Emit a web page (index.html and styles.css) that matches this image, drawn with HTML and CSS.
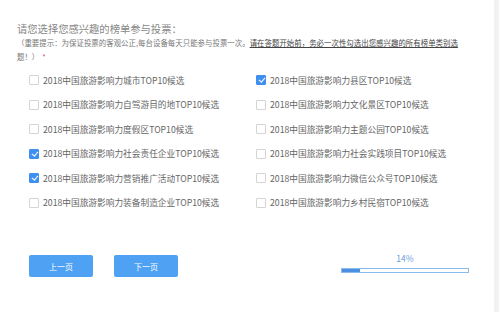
FILE: index.html
```html
<!DOCTYPE html>
<html lang="zh-CN">
<head>
<meta charset="utf-8" />
<title>榜单投票</title>
<link rel="stylesheet" href="styles.css">
</head>
<body>
<div class="page">
  <main class="survey">
    <div class="title">请您选择您感兴趣的榜单参与投票：</div>
    <div class="note">
      <div class="line">（重要提示：为保证投票的客观公正,每台设备每天只能参与投票一次。<span class="strong">请在答题开始前，务必一次性勾选出您感兴趣的所有榜单类别选</span></div>
      <div class="line">题！）<span class="req">*</span></div>
    </div>

    <div class="options">
      <label class="opt"><span class="box"></span>2018中国旅游影响力城市TOP10候选</label>
      <label class="opt"><span class="box on"></span>2018中国旅游影响力县区TOP10候选</label>
      <label class="opt"><span class="box"></span>2018中国旅游影响力自驾游目的地TOP10候选</label>
      <label class="opt"><span class="box"></span>2018中国旅游影响力文化景区TOP10候选</label>
      <label class="opt"><span class="box"></span>2018中国旅游影响力度假区TOP10候选</label>
      <label class="opt"><span class="box"></span>2018中国旅游影响力主题公园TOP10候选</label>
      <label class="opt"><span class="box on"></span>2018中国旅游影响力社会责任企业TOP10候选</label>
      <label class="opt"><span class="box"></span>2018中国旅游影响力社会实践项目TOP10候选</label>
      <label class="opt"><span class="box on"></span>2018中国旅游影响力营销推广活动TOP10候选</label>
      <label class="opt"><span class="box"></span>2018中国旅游影响力微信公众号TOP10候选</label>
      <label class="opt"><span class="box"></span>2018中国旅游影响力装备制造企业TOP10候选</label>
      <label class="opt"><span class="box"></span>2018中国旅游影响力乡村民宿TOP10候选</label>
    </div>

    <div class="footer">
      <button class="btn">上一页</button>
      <button class="btn">下一页</button>
      <div class="progress">
        <div class="pct">14%</div>
        <div class="bar"><div class="fill" style="width:14%"></div></div>
      </div>
    </div>
  </main>
  <div class="scroll"></div>
</div>
</body>
</html>
```

FILE: styles.css
```css
html,body{margin:0;width:499px;height:312px;overflow:hidden;background:#fff}
body{font-family:"Noto Sans CJK SC","Liberation Sans",sans-serif;color:#666}

.page{display:flex;height:100%}
.survey{flex:1;padding:22px 0 0 17px}
.scroll{width:5px;background:#f2f2f2}

/* 标题 + 提示 */
.title{font-size:10.3px;line-height:14px;color:#888}
.note{font-size:7.45px;line-height:13.5px;color:#777}
.note .line{white-space:nowrap}
.note .strong{color:#444;text-decoration:underline}
.note .req{color:#e05050;margin-left:3px}

/* 选项 */
.options{display:grid;grid-template-columns:227px 1fr;margin:5px 0 0 12px}
.opt{display:flex;align-items:center;height:24.5px;font-size:8.7px;color:#666;white-space:nowrap}
.box{width:8px;height:8px;border:1px solid #d4d4d4;border-radius:1px;margin-right:4px;background:#fff;position:relative;flex:none}
.box.on{background:#3f8ff0;border-color:#3f8ff0}
.box.on::after{content:"";position:absolute;left:2.5px;top:0;width:2.5px;height:5px;border:solid #fff;border-width:0 1.4px 1.4px 0;transform:rotate(40deg)}

/* 底部 */
.footer{display:flex;align-items:flex-end;margin:37px 0 0 12px}
.btn{width:64px;height:22px;border:0;border-radius:2px;background:#4ea1f3;color:#fff;font-family:inherit;font-size:8px;padding:0;margin-right:21px}
.progress{margin:0 0 4px 142px;width:128px;text-align:center}
.pct{font-size:8.5px;color:#6a9ee0;line-height:12px;margin-bottom:4px}
.bar{height:3px;border:1px solid #8cbbec;background:#fff}
.fill{height:100%;background:#4a8fe3}
```
